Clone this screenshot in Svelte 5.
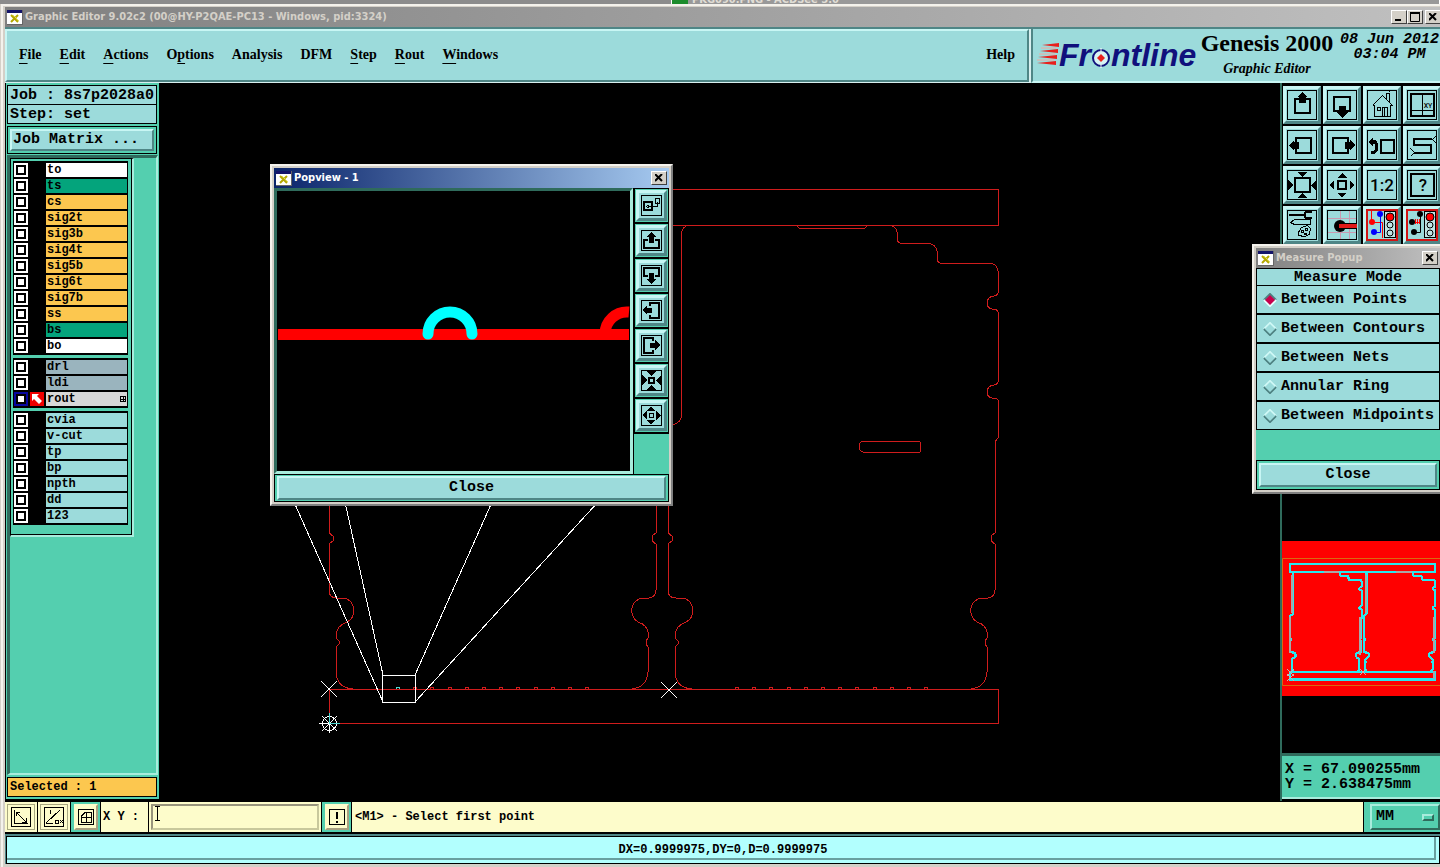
<script>
	const menus = [
		{ pre: '', key: 'F', post: 'ile' },
		{ pre: '', key: 'E', post: 'dit' },
		{ pre: '', key: 'A', post: 'ctions' },
		{ pre: 'O', key: 'p', post: 'tions' },
		{ pre: 'Analysis', key: '', post: '' },
		{ pre: 'DFM', key: '', post: '' },
		{ pre: '', key: 'S', post: 'tep' },
		{ pre: '', key: 'R', post: 'out' },
		{ pre: '', key: 'W', post: 'indows' }
	]

	const layerGroups = [
		[
			['to', 'white'],
			['ts', 'mask'],
			['cs', 'signal'],
			['sig2t', 'signal'],
			['sig3b', 'signal'],
			['sig4t', 'signal'],
			['sig5b', 'signal'],
			['sig6t', 'signal'],
			['sig7b', 'signal'],
			['ss', 'signal'],
			['bs', 'mask'],
			['bo', 'white']
		],
		[
			['drl', 'drill'],
			['ldi', 'drill'],
			['rout', 'work']
		],
		[
			['cvia', 'misc'],
			['v-cut', 'misc'],
			['tp', 'misc'],
			['bp', 'misc'],
			['npth', 'misc'],
			['dd', 'misc'],
			['123', 'misc']
		]
	]

	// line = 2px strokes, thin = 1px strokes, fill = solid parts (30 x 30 grid)
	const tools = [
		{ name: 'Pan up', line: 'M8 9H23V23H8Z', fill: 'M15 2L21 7H19V13H12V7H10Z' },
		{ name: 'Pan down', line: 'M7 7H23V21H7Z', fill: 'M15 28L21 22H19V16H12V22H10Z' },
		{
			name: 'Home',
			thin: 'M5 15L15 5L25 15H23V26H7V15H5M10 17h3v3h-3zM15 26V17H20V26M17 17V26M19 8V3H22V11M21 2L23 0'
		},
		{ name: 'Go to XY', line: 'M4 4H27V26H4Z', thin: 'M15 4V25M4 20H26', text: 'XY', size: 7, tx: 21, ty: 18 },
		{ name: 'Pan left', line: 'M9 8H24V23H9Z', fill: 'M2 15L7 10V12H12V19H7V21Z' },
		{ name: 'Pan right', line: 'M6 8H21V23H6Z', fill: 'M28 15L23 10V12H18V19H23V21Z' },
		{ name: 'Previous view', line: 'M14 10H27V23H14Z', fill: 'M1 12L6 7V10H9L11 14V20L8 24H4V21H7L8 19V14H6V17Z' },
		{ name: 'Serpentine', line: 'M25 9H7V15H24V23H7', thin: 'M25 9L29 5M25 9L29 13M7 22L3 18M7 22L3 26' },
		{
			name: 'Fit to screen',
			line: 'M8 8H23V22H8Z',
			fill: 'M15 7L10 2H21ZM15 23L10 28H21ZM6 15L1 10V21ZM24 15L29 10V21Z'
		},
		{
			name: 'Zoom out',
			line: 'M11 11H19V19H11Z',
			fill: 'M15 3L20 8H10ZM15 27L20 23H10ZM3 15L7 10V20ZM27 15L23 10V20Z'
		},
		{ name: 'Scale', text: '1:2', size: 17, tx: 15, ty: 21 },
		{ name: 'Help on tool', line: 'M4 4H27V26H4Z', text: '?', size: 17, tx: 16, ty: 21 },
		{
			name: 'Options',
			line: 'M2 5H17M17 5L19 2H25M17 5L19 8H25',
			thin: 'M3 12L7 9H23V14H7ZM11 22L14 17L20 15L23 18L22 24L17 26L11 25ZM14 20h2v2h-2zM18 18h2v2h-2zM17 23h2v1h-2z'
		},
		{ name: 'Select feature', special: 'select' },
		{ name: 'Net check', special: 'net', hot: true },
		{ name: 'Measure', special: 'measure', hot: true }
	]

	// 21 x 21 grid
	const viewTools = [
		{ name: 'Link view', line: 'M3 7H11V15H3Z', thin: 'M14 3h4v5h-4zM16 6V11H6M8 9L5 11L8 13' },
		{ name: 'Up', line: 'M7 10H3V18H18V10H14', fill: 'M10 2L15 7H13V13H8V7H6Z' },
		{ name: 'Down', line: 'M7 11H3V3H18V11H14', fill: 'M10 19L15 14H13V8H8V14H6Z' },
		{ name: 'Left', line: 'M9 6V3H18V18H9V15', fill: 'M1 10L6 5V8H11V13H6V15Z' },
		{ name: 'Right', line: 'M12 6V3H3V18H12V15', fill: 'M19 10L14 5V8H9V13H14V15Z' },
		{ name: 'Zoom in', line: 'M8 8H13V13H8Z', fill: 'M10 6L5 1H16ZM10 15L5 20H16ZM6 10L1 5V16ZM15 10L20 5V16Z' },
		{ name: 'Zoom out', thin: 'M8 8H12V12H8Z', fill: 'M10 1L14 6H6ZM10 20L14 15H6ZM1 10L6 6V15ZM20 10L15 6V15Z' }
	]

	const modes = ['Between Points', 'Between Contours', 'Between Nets', 'Annular Ring', 'Between Midpoints']
	let mode = $state('Between Points')
	let working = $state('rout')

	const board =
		'M700 225H690Q681 226 681 236V418Q681 421 675 424Q668 427 668 431V533L672 536V541L668 544V590Q668 598 676 598H681' +
		'C696 599 696 618 686 622Q675 626 675 636V638L678 641V644L675 647V672Q676 688 692 689M971 689Q986 687 987 672V647L985 644V641' +
		'L987 638V632Q986 625 977 622C967 616 969 599 983 598H988Q995 597 995 590V544L991 541V536L995 533V442L998 438V400Q997 398 994 398' +
		'H992Q987 397 987 392Q987 386 994 385Q998 384 998 382V312Q997 309 994 309H992Q987 308 987 303Q987 297 994 296Q998 295 998 293V271' +
		'Q997 263 988 263H940Q937 262 937 258V251Q936 244 927 243H900Q897 242 897 239V232Q896 226 888 225M796 225L799 228H865L868 225'
	const rails = 'M329 189H998V225H329ZM998 689V723H329V689Z'
	const teeth = Array.from({ length: 12 }, (_, i) => 737 + Math.round(i * 17.2))
</script>

{#snippet appIcon()}
	<svg class="app-icon" width="16" height="15" viewBox="0 0 16 15" aria-hidden="true">
		<rect width="16" height="15" fill="#666" />
		<rect width="15" height="14" fill="#fff" />
		<rect width="15" height="3" fill="#14146a" />
		<path d="M4 5L11 12M11 5L4 12" stroke="#b5a800" stroke-width="2" />
		<path d="M6 5L12 11" stroke="#e6e05a" />
	</svg>
{/snippet}

{#snippet glyph(icon, size)}
	<svg width={size} height={size} viewBox="0 0 {size} {size}" shape-rendering="crispEdges" aria-hidden="true">
		<rect x="0.5" y="0.5" width={size - 1} height={size - 1} fill={icon.hot ? '#9cdbdb' : 'none'} stroke={icon.hot ? '#d21414' : '#000'} />
		{#if icon.line}<path d={icon.line} fill="none" stroke="#000" stroke-width="2" />{/if}
		{#if icon.thin}<path d={icon.thin} transform="translate(.5 .5)" fill="none" stroke="#000" />{/if}
		{#if icon.fill}<path d={icon.fill} />{/if}
		{#if icon.text}
			<text x={icon.tx} y={icon.ty} font-size={icon.size} text-anchor="middle" font-weight="500" font-family="Roboto, sans-serif">{icon.text}</text>
		{/if}
		{#if icon.special === 'select'}
			<path d="M13.5 1V29M22.5 1V29M1 8.5H29M1 22.5H29" stroke="#c99ab0" />
			<circle cx="13" cy="16" r="6" shape-rendering="auto" />
			<path d="M10 16H30" stroke="#000" stroke-width="6" />
			<path d="M12 16H30" stroke="#e01818" stroke-width="4" />
		{:else if icon.special}
			<g shape-rendering="auto">
				<rect x="17.5" y="1.5" width="11" height="26" fill="#bfe5e5" stroke="#000" />
				<circle cx="23" cy="7" r="4" fill="#f00" stroke="#000" />
				<circle cx="23" cy="15" r="3" fill="none" stroke="#000" />
				<circle cx="23" cy="23" r="3" fill="none" stroke="#000" />
				{#if icon.special === 'net'}
					<path d="M4.500 1V12M5 12.500H15.500V28" fill="none" stroke="#f00" />
					<path d="M13.500 4V22.500H8" fill="none" stroke="#00f" />
					<circle cx="5" cy="12" r="3" fill="#f00" />
					<circle cx="13" cy="4" r="3" fill="#00f" />
					<circle cx="7" cy="22" r="3" fill="#00f" />
				{:else}
					<path d="M5 12.500H13.500M13.500 4V22.500H8" fill="none" stroke="#000" />
					<path d="M8.500 9V14M10.500 9V14M12.500 9V14M6 12.500H13" stroke="#f00" />
					<circle cx="5" cy="12" r="3" />
					<circle cx="13" cy="4" r="3" />
					<circle cx="7" cy="22" r="3" />
				{/if}
			</g>
		{/if}
	</svg>
{/snippet}

{#snippet cross()}
	<svg width="8" height="8" viewBox="0 0 8 8" aria-hidden="true"><path d="M0 0L7 7M7 0L0 7" stroke="#000" stroke-width="2" /></svg>
{/snippet}

<div class="desktop">
	<div class="behind">
		<span></span>
		<span class="other"><i></i>PKG090.PNG - ACDSee 5.0</span>
	</div>

	<main class="window">
		<header class="title">
			{@render appIcon()}
			<h1>Graphic Editor 9.02c2 (00@HY-P2QAE-PC13 - Windows, pid:3324)</h1>
			<button class="caption" aria-label="Minimize"><svg width="8" height="8"><path d="M0 7H6" stroke="#000" stroke-width="2" /></svg></button>
			<button class="caption" aria-label="Maximize"><svg width="10" height="10"><path d="M.5 9.500V1H9.500V9.500Z" fill="none" stroke="#000" /><path d="M0 1H10" stroke="#000" stroke-width="2" /></svg></button>
			<button class="caption last" aria-label="Close window">{@render cross()}</button>
		</header>

		<div class="top">
			<nav class="menubar">
				{#each menus as menu}
					<button>{menu.pre}{#if menu.key}<u>{menu.key}</u>{/if}{menu.post}</button>
				{/each}
				<button class="help">Help</button>
			</nav>
			<section class="brand">
				<div class="logo">
					<svg width="22" height="24" viewBox="0 0 22 24" aria-hidden="true">
						<path d="M5 2L22 0V4ZM3 8L21 6V10ZM1 14L20 12V16ZM0 20L19 18V22Z" fill="#e8201c" />
						<path d="M4 5H19M2 11H18M0 17H17" stroke="#f0a8a0" />
					</svg>
					<span>Fr<svg width="20" height="20" viewBox="0 0 20 20" aria-label="o"><circle cx="10" cy="10" r="8" fill="#d8f4f4" stroke="#10107c" stroke-width="2" /><path d="M10 6L14 10L10 14L6 10Z" fill="#e8201c" /><path d="M10 0V3M10 17V20" stroke="#fff" /></svg>ntline</span>
				</div>
				<div class="product">
					<strong>Genesis 2000</strong>
					<em>Graphic Editor</em>
				</div>
				<time>08 Jun 2012<br />03:04 PM</time>
			</section>
		</div>

		<div class="workspace">
			<aside class="sidebar">
				<div class="job">
					<div>Job : 8s7p2028a0</div>
					<div>Step: set</div>
				</div>
				<div class="well">
					<button class="raised matrix">Job Matrix ...</button>
				</div>
				<div class="layers-area">
					<div class="layers">
						{#each layerGroups as group}
							<div class="group">
								{#each group as [name, kind]}
									<label class="layer" class:active={name === working}>
										<input type="checkbox" checked={name === working} />
										<span class="mark">
											{#if name === working}
												<svg width="14" height="14" viewBox="0 0 14 14" aria-hidden="true"><rect width="14" height="14" fill="#f00000" /><path d="M2 2H9L7 4L12 9L9 12L4 7L2 9Z" fill="#fff" /></svg>
											{/if}
										</span>
										<span class="name {kind}">
											{name}
											{#if name === working}
												<svg width="6" height="6" viewBox="0 0 6 6" shape-rendering="crispEdges" aria-hidden="true"><path d="M.5 .5H5.500V5.500H.5ZM3 0V6M0 3H6" fill="none" stroke="#000" /></svg>
											{/if}
										</span>
									</label>
								{/each}
							</div>
						{/each}
					</div>
				</div>
				<div class="selected">Selected : 1</div>
			</aside>

			<section class="canvas">
				<svg width="100%" height="100%" aria-label="Board outline">
					<g transform="translate(-159 -83)" fill="none" shape-rendering="crispEdges">
						<g stroke="#d01c1c">
							<path d={rails} />
							{#each [0, -339] as dx}
								<g transform="translate({dx} 0)">
									<path d={board} />
									<path d="M863 441H919Q921 442 920 447Q921 451 920 452H863Q859 451 859 447Q859 442 863 441" />
									{#each teeth as x, i}
										<path d="M{x - 2} 689Q{x} 685 {x + 2} 689" stroke={dx && i === 0 ? '#4fd8d0' : '#d01c1c'} />
									{/each}
								</g>
							{/each}
						</g>
						<g stroke="#fff">
							<path d="M382.500 675.500H415.500V702.500H382.500ZM294 502L383 702M345 502L383 675M492 502L415 675M598 502L415 702" />
							<path d="M321 681L337 697M337 681L321 697M661 682L677 698M677 682L661 698" />
							<path d="M329.500 713V733M319 723.500H339M322 716L337 731M337 716L322 731" />
							<circle cx="329.500" cy="723.500" r="7" />
						</g>
						<path d="M329.500 713V723.500H340" stroke="#4fd8d0" />
					</g>
				</svg>

				<section class="popup popview" aria-label="Popview">
					<header class="title blue">
						{@render appIcon()}
						<h2>Popview - 1</h2>
						<button class="caption" aria-label="Close popview">{@render cross()}</button>
					</header>
					<div class="view-row">
						<div class="view">
							<svg width="100%" height="100%" fill="none" aria-label="Magnified outline">
								<path d="M1 143.500H352" stroke="#f00" stroke-width="11" />
								<path d="M151 143A22 22 0 0 1 195 143" stroke="#0ff" stroke-width="11" stroke-linecap="round" />
								<path d="M328 143A22 22 0 0 1 352 121" stroke="#f00" stroke-width="11" />
							</svg>
						</div>
						<div class="view-tools">
							{#each viewTools as tool}
								<div class="slot"><button class="raised" aria-label={tool.name}>{@render glyph(tool, 21)}</button></div>
							{/each}
						</div>
					</div>
					<div class="well"><button class="raised close">Close</button></div>
				</section>
			</section>

			<aside class="right">
				<div class="tools">
					{#each tools as tool}
						<button class="raised" class:hot={tool.hot} aria-label={tool.name}>{@render glyph(tool, 30)}</button>
					{/each}
				</div>
				<div class="overview">
					<svg width="158" height="155" fill="none" aria-label="Overview">
						<rect width="158" height="155" fill="#f00" />
						<path d="M158 17.500H.5V144.500H158" stroke="#d86a10" />
						<g transform="translate(-63 -18) scale(.2165)" stroke="#28e8f0" stroke-width="10" shape-rendering="crispEdges">
							<path d={rails} />
							<path d={board} />
							<path d={board} transform="translate(-339 0)" />
						</g>
						<path d="M10 34V72M8 76V112M84 34V72M78 76V114M152 76V112M42 31H57M114 31H130M152 130V138" stroke="#a8a8a8" stroke-width="2" />
						<path d="M5 128L12 135M12 128L5 135M5 133L12 140M12 133L5 140M78 128L84 134M84 128L78 134" stroke="#d0b0b0" />
					</svg>
				</div>
				<div class="coords">X = 67.090255mm<br />Y = 2.638475mm</div>
			</aside>

			<section class="popup measure" aria-label="Measure Popup">
				<header class="title">
					{@render appIcon()}
					<h2>Measure Popup</h2>
					<button class="caption" aria-label="Close measure">{@render cross()}</button>
				</header>
				<fieldset>
					<legend>Measure Mode</legend>
					{#each modes as item}
						<label>
							<input type="radio" name="mode" value={item} bind:group={mode} />
							<svg width="14" height="14" viewBox="0 0 14 14" aria-hidden="true">
								<path d="M1 7L7 1L13 7" fill="none" stroke={mode === item ? '#4d8080' : '#d0f8f6'} stroke-width="2" />
								<path d="M1 7L7 13L13 7" fill="none" stroke={mode === item ? '#e8ffff' : '#4d8080'} stroke-width="2" />
								<path d="M7 2L12 7L7 12L2 7Z" fill={mode === item ? '#c8004c' : '#9cdbdb'} />
							</svg>
							{item}
						</label>
					{/each}
				</fieldset>
				<div class="filler"></div>
				<div class="well"><button class="raised close">Close</button></div>
			</section>
		</div>

		<div class="entry">
			<button class="cell" aria-label="Snap corner"><svg width="22" height="22" viewBox="0 0 22 22" shape-rendering="crispEdges"><path d="M1.500 1.500H20.500V20.500H1.500ZM4.500 4V17.500H18M6 6L16 16M6 10V6.500H10M16.500 12V16.500H12" fill="none" stroke="#000" /></svg></button>
			<button class="cell" aria-label="Snap angle"><svg width="22" height="22" viewBox="0 0 22 22" shape-rendering="crispEdges"><path d="M1.500 1.500H20.500V20.500H1.500ZM3 17L17 4M3 17.500H10M7.500 4V8M12.500 14.500h3v3h-3zM17 14L20 17M20 14L17 17" fill="none" stroke="#000" /></svg></button>
			<button class="cell green" aria-label="Grid"><span><svg width="18" height="18" viewBox="0 0 18 18" shape-rendering="crispEdges"><path d="M1.500 1.500H16.500V16.500H1.500ZM4.500 14.500H14.500V4.500H8L4.500 8ZM9.500 4V14M4 9.500H15" fill="none" stroke="#000" /></svg></span></button>
			<label for="xy">X Y :</label>
			<div class="xy-field">
				<input id="xy" type="text" />
				<svg class="ibeam" width="7" height="15" viewBox="0 0 7 15" aria-hidden="true"><path d="M1 .5H6M1 14.500H6M3.500 0V15" stroke="#000" /></svg>
			</div>
			<button class="cell green" aria-label="Alert"><span><svg width="18" height="18" viewBox="0 0 18 18" shape-rendering="crispEdges"><path d="M1.500 1.500H16.500V16.500H1.500Z" fill="none" stroke="#000" /><path d="M9 4V11M9 13V15" stroke="#000" stroke-width="2" /></svg></span></button>
			<p class="message">&lt;M1&gt; - Select first point</p>
			<div class="units">
				<select aria-label="Units">
					<option>MM</option>
					<option>Inch</option>
				</select>
				<i></i>
			</div>
		</div>

		<footer><p>DX=0.9999975,DY=0,D=0.9999975</p></footer>
	</main>
</div>

<style>
	:global(body) {
		background: #000;
	}

	.desktop {
		--face: #9cdbdb;
		--lit: #c8f6f4;
		--shade: #4f8686;
		--green: #54cfaf;
		--green-lit: #a8ecdc;
		--green-dark: #2f6b5c;
		--cream: #fdfccb;
		--win: #d4d0c8;
		min-height: 100vh;
		display: flex;
		flex-direction: column;
		overflow: hidden;
		background: var(--win);
		color: #000;
		font: bold 15px/18px 'Liberation Mono', monospace;
	}

	* {
		box-sizing: border-box;
	}

	svg {
		display: block;
		flex: none;
	}

	button,
	input,
	select {
		margin: 0;
		padding: 0;
		border: 0;
		border-radius: 0;
		background: none;
		color: inherit;
		font: inherit;
	}

	h1,
	h2,
	p {
		margin: 0;
		font-size: inherit;
	}

	.behind {
		display: flex;
		height: 4px;
		overflow: hidden;
		background: #8c8c8c;
	}

	.behind span {
		width: 672px;
		border-right: 1px solid #fff;
	}

	.behind .other {
		flex: 1;
		display: flex;
		align-items: flex-end;
		gap: 4px;
		color: #e0ddd5;
		font: bold 11px/8px 'DejaVu Sans Condensed', sans-serif;
		background: #999;
	}

	.other i {
		width: 16px;
		height: 4px;
		background: #1c8c2c;
	}

	.window {
		flex: 1;
		display: flex;
		flex-direction: column;
		border-top: 2px solid #f4f2ec;
		border-left: 2px solid #f4f2ec;
		margin-left: 1px;
		padding: 1px 0 3px 2px;
	}

	.title {
		display: flex;
		align-items: center;
		height: 20px;
		padding: 0 2px;
		background: linear-gradient(90deg, #808080, #c0c0c0);
		color: #d4d0c8;
		font: bold 11px/20px 'DejaVu Sans Condensed', sans-serif;
	}

	.title.blue {
		background: linear-gradient(90deg, #0a246a, #a6caf0);
		color: #fff;
	}

	.title h1,
	.title h2 {
		flex: 1;
		padding-left: 2px;
		white-space: nowrap;
	}

	.caption {
		display: grid;
		place-items: center;
		width: 16px;
		height: 14px;
		border: 1px solid;
		border-color: #fff #404040 #404040 #fff;
		background: var(--win);
	}

	.caption.last {
		margin-left: 2px;
	}

	.window > .title {
		padding-right: 0;
		margin-right: -1px;
	}

	.top {
		display: flex;
		gap: 2px;
		height: 56px;
		border-top: 2px solid var(--shade);
		background: #d8f0f0;
	}

	.menubar {
		flex: 1;
		display: flex;
		align-items: center;
		gap: 18px;
		margin-bottom: 1px;
		padding: 0 12px 2px;
		border: 2px solid;
		border-color: var(--lit) var(--shade) var(--shade) var(--lit);
		background: var(--face);
		font: bold 14px/20px 'Liberation Serif', serif;
	}

	.menubar u {
		text-underline-offset: 4px;
	}

	.help {
		margin-left: auto;
	}

	.brand {
		flex: none;
		width: 409px;
		display: flex;
		align-items: center;
		border-left: 2px solid var(--shade);
		border-bottom: 2px solid var(--lit);
		background: var(--face);
		overflow: hidden;
		white-space: nowrap;
	}

	.logo {
		display: flex;
		align-items: center;
		width: 165px;
		padding-left: 4px;
	}

	.logo span {
		display: flex;
		align-items: center;
		color: #10107c;
		font: italic bold 32px/34px 'Liberation Sans', sans-serif;
	}

	.logo span svg {
		margin-top: 6px;
	}

	.product {
		align-self: flex-start;
		display: flex;
		flex-direction: column;
		width: 138px;
		font-family: 'Liberation Serif', serif;
		text-align: center;
	}

	.product strong {
		font-size: 24px;
		line-height: 28px;
	}

	.product em {
		font-size: 14px;
		line-height: 24px;
	}

	time {
		align-self: flex-start;
		padding: 3px 0 0 4px;
		font-style: italic;
		line-height: 15px;
		text-align: center;
	}

	.workspace {
		position: relative;
		flex: 1;
		display: flex;
		min-height: 0;
		overflow: hidden;
		background: #000;
	}

	.sidebar {
		flex: none;
		width: 154px;
		display: flex;
		flex-direction: column;
		margin-bottom: 2px;
		padding: 2px 2px 2px 1px;
		border-left: 1px solid #000;
		background: var(--green);
	}

	.job {
		border: 1px solid #000;
		background: var(--face);
	}

	.job div {
		height: 18px;
		padding-left: 2px;
		line-height: 20px;
		white-space: nowrap;
	}

	.job div + div {
		border-top: 1px solid #000;
		height: 19px;
	}

	.well {
		padding: 2px;
		border: 1px solid #000;
		background: var(--green);
	}

	.sidebar .well {
		margin-top: 2px;
	}

	.raised {
		display: grid;
		place-items: center;
		border: 2px solid;
		border-color: var(--lit) var(--shade) var(--shade) var(--lit);
		background: var(--face);
	}

	.matrix {
		display: block;
		width: 100%;
		height: 22px;
		padding-left: 1px;
		text-align: left;
		line-height: 18px;
	}

	.layers-area {
		flex: 1;
		margin: 1px -1px 2px 0;
		border: solid;
		border-width: 3px 2px 2px 3px;
		border-color: var(--green-dark) var(--green-lit) var(--green-lit) var(--green-dark);
	}

	.layers {
		width: 124px;
		padding: 2px 4px 10px 2px;
		border: solid;
		border-width: 1px 2px 2px 1px;
		border-color: #000 var(--green-lit) var(--green-lit) #000;
		box-shadow: inset -1px -1px #000;
	}

	.group {
		padding: 2px 1px 0;
		background: #000;
	}

	.group + .group {
		margin-top: 3px;
	}

	.layer {
		display: flex;
		height: 16px;
		padding-bottom: 2px;
		font-size: 12px;
		line-height: 14px;
	}

	.layer input {
		appearance: none;
		width: 14px;
		height: 14px;
		border: 2px solid #000;
		outline: 2px solid #fff;
		outline-offset: -2px;
		background: #fff;
		box-shadow: inset 0 0 0 2px #000;
	}

	.layer.active input {
		outline-color: #0808a0;
	}

	.mark {
		width: 18px;
		padding-left: 2px;
	}

	.name {
		flex: 1;
		display: flex;
		align-items: center;
		justify-content: space-between;
		padding: 0 1px;
	}

	.white {
		background: #fff;
	}

	.mask {
		background: #04a47c;
	}

	.signal {
		background: #fcc74f;
	}

	.drill {
		background: #9ab4be;
	}

	.work {
		background: #d8d8d8;
	}

	.misc {
		background: var(--face);
	}

	.selected {
		height: 20px;
		padding-left: 2px;
		border: 1px solid #000;
		background: #fcc74f;
		font-size: 12px;
		line-height: 18px;
	}

	.canvas {
		position: relative;
		flex: 1;
		min-width: 0;
	}

	.canvas > svg {
		position: absolute;
	}

	.popup {
		position: absolute;
		padding: 2px;
		border: 2px solid;
		border-color: #f4f2ec #808080 #808080 #f4f2ec;
		background: var(--win);
	}

	.popup .title {
		height: 20px;
		line-height: 20px;
	}

	.popview {
		top: 81px;
		left: 111px;
		width: 403px;
	}

	.view-row {
		display: flex;
		background: #000;
	}

	.view {
		flex: 1;
		height: 286px;
		border: 3px solid;
		border-color: var(--green-dark) var(--green-lit) var(--green-lit) var(--green-dark);
	}

	.view-tools {
		width: 35px;
		margin-left: 1px;
		padding-top: 1px;
		background: linear-gradient(#000 246px, var(--green) 246px);
	}

	.slot {
		width: 33px;
		height: 33px;
		margin: 0 1px 2px;
		padding: 1px;
		background: var(--green);
	}

	.slot .raised {
		width: 31px;
		height: 31px;
		border-width: 3px;
	}

	.close {
		width: 100%;
		height: 24px;
	}

	.popview .well {
		padding: 1px 2px;
	}

	.right {
		flex: none;
		width: 160px;
		display: flex;
		flex-direction: column;
		justify-content: space-between;
		border-left: 2px solid var(--green-dark);
		overflow: hidden;
	}

	.tools {
		display: grid;
		grid-template-columns: repeat(4, 38px);
		gap: 2px;
		padding: 3px 0 0 1px;
	}

	.tools .raised {
		height: 38px;
		border-width: 3px;
	}

	.raised.hot {
		background: #d21414;
	}

	.overview {
		margin-top: 240px;
	}

	.coords {
		height: 46px;
		margin-bottom: 2px;
		padding: 6px 0 0 3px;
		border-top: 3px solid var(--green-dark);
		border-bottom: 2px solid var(--green-lit);
		background: var(--green);
		line-height: 15px;
		white-space: nowrap;
	}

	.measure {
		top: 161px;
		right: -4px;
		width: 192px;
	}

	fieldset {
		margin: 0;
		padding: 0;
		border: solid #000;
		border-width: 0 1px;
		background: #000;
	}

	legend {
		float: left;
		width: 100%;
		height: 17px;
		padding: 0;
		border-top: 1px solid #000;
		background: var(--face);
		line-height: 17px;
		text-align: center;
	}

	fieldset label {
		clear: both;
		display: flex;
		align-items: center;
		gap: 4px;
		height: 29px;
		padding-left: 6px;
		border-top: 1px solid #000;
		border-bottom: 1px solid #000;
		background: var(--face);
		white-space: nowrap;
	}

	fieldset input {
		position: absolute;
		opacity: 0;
	}

	.filler {
		height: 30px;
		background: var(--green);
	}

	.entry {
		display: flex;
		height: 33px;
		padding-top: 1px;
		gap: 1px;
		border-bottom: 2px solid #000;
		background: #000;
	}

	.cell {
		display: grid;
		place-items: center;
		width: 32px;
		border: 3px double #a8a880;
		outline: 1px solid var(--cream);
		outline-offset: -1px;
		background: var(--cream);
	}

	.cell.green {
		width: 29px;
		border: 0;
		outline: 0;
		background: var(--green);
	}

	.cell.green span {
		display: grid;
		place-items: center;
		width: 24px;
		height: 26px;
		border: 2px solid;
		border-color: var(--cream) #a8a080 #a8a080 var(--cream);
		background: var(--cream);
	}

	.entry label {
		width: 47px;
		padding-left: 2px;
		background: var(--cream);
		font-size: 12px;
		line-height: 31px;
	}

	.xy-field {
		position: relative;
		width: 172px;
		padding: 2px;
		background: var(--cream);
	}

	.xy-field input {
		width: 100%;
		height: 26px;
		padding-left: 4px;
		border: 2px solid;
		border-color: #98947c #c8c89c #c8c89c #98947c;
	}

	.ibeam {
		position: absolute;
		top: 4px;
		left: 5px;
	}

	.message {
		flex: 1;
		padding-left: 3px;
		background: var(--cream);
		font-size: 12px;
		line-height: 31px;
	}

	.units {
		position: relative;
		width: 76px;
		padding: 2px 0 2px 6px;
		background: var(--green);
	}

	.units select {
		appearance: none;
		width: 70px;
		height: 26px;
		padding-left: 4px;
		border: 2px solid;
		border-color: var(--green-lit) var(--green-dark) var(--green-dark) var(--green-lit);
	}

	.units i {
		position: absolute;
		top: 12px;
		right: 6px;
		width: 12px;
		height: 7px;
		border: 2px solid;
		border-color: var(--green-lit) var(--green-dark) var(--green-dark) var(--green-lit);
	}

	footer {
		padding: 2px 0 0 1px;
		background: var(--shade);
	}

	footer p {
		height: 28px;
		border: 1px solid #000;
		background: #b2fffe;
		box-shadow:
			inset -3px -3px #b2fffe,
			inset -5px -5px #68a0a0;
		font-size: 12px;
		line-height: 26px;
		text-align: center;
	}
</style>
